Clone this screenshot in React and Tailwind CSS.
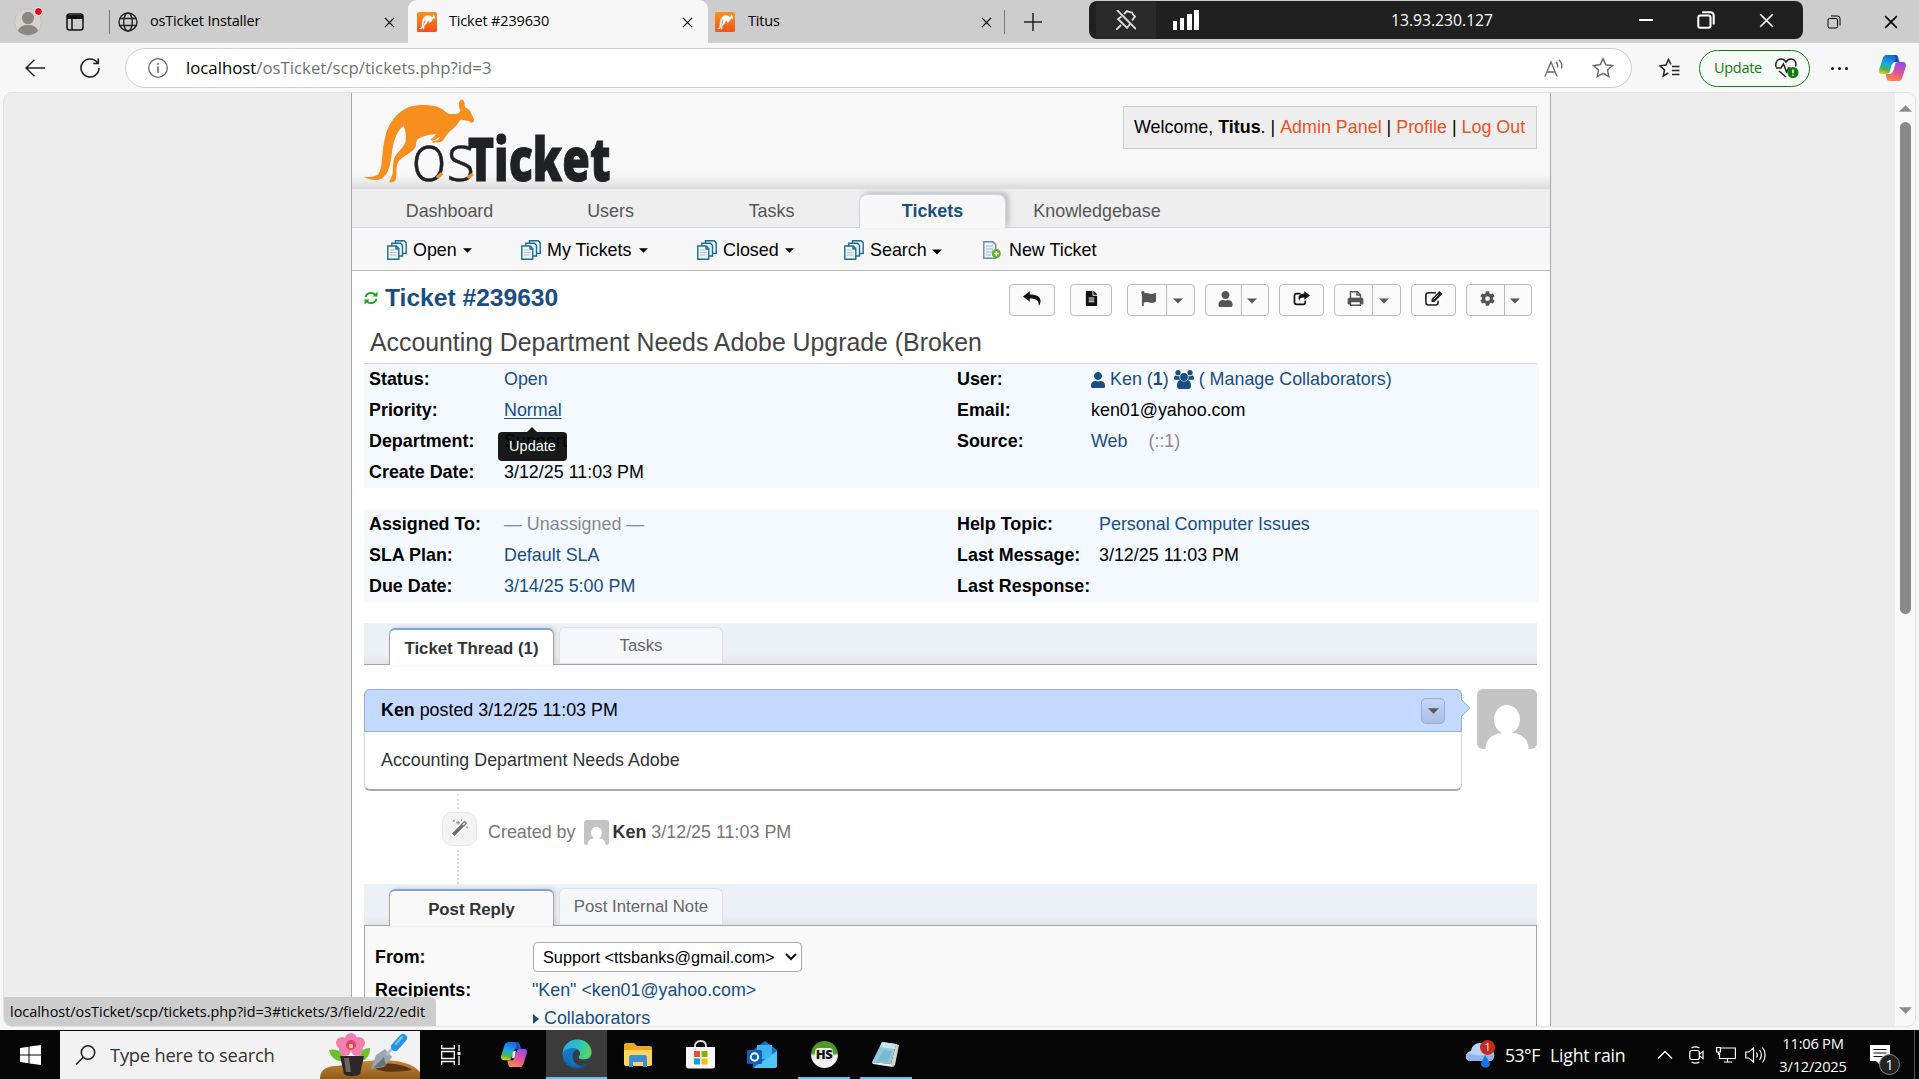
import React from "react";
import { FaFileAlt, FaFlag, FaUser, FaCog } from "react-icons/fa";

const Caret = ({ className = "" }) => (
  <svg viewBox="0 0 10 5" className={className} fill="currentColor"><path d="M0 0h10L5 5z" /></svg>
);

const CloseX = ({ className = "" }) => (
  <svg viewBox="0 0 12 12" className={className} fill="none" stroke="currentColor" strokeWidth="1.4"><path d="M1 1l10 10M11 1L1 11" /></svg>
);

const Restore = ({ className = "", w = 1.3 }) => (
  <svg viewBox="0 0 14 14" className={className} fill="none" stroke="currentColor" strokeWidth={w}>
    <rect x="1" y="3.5" width="9.5" height="9.5" rx="1.5" />
    <path d="M4 1h6.5a2.5 2.5 0 0 1 2.5 2.500V10.500" />
  </svg>
);

const KANGA =
  "M272 28C279 26 282 36 282 50C290 56 296 60 298 70L305 88C305 94 302 97 297 97C289 88 280 90 272 88C266 96 262 108 247 121C238 130 235 140 228 150C222 158 212 155 202 157C200 152 206 152 216 149L222 138L206 150C196 150 196 146 203 143L212 130C200 134 185 133 168 145C160 153 165 165 160 172C150 190 125 200 118 216C113 232 116 250 113 266C110 274 104 276 98 275C96 268 102 264 104 254C108 235 104 215 110 200C118 182 135 170 137 150C139 132 136 118 132 106C112 125 106 160 103 190C99 225 94 262 68 268C52 269 42 264 34 259C50 260 62 258 70 250C82 232 78 180 86 145C92 100 115 65 145 50C170 41 205 43 220 52C235 60 238 72 248 71C262 72 270 68 271 60C266 48 266 34 272 28Z";

const Logo = () => (
  <svg viewBox="30 20 620 260" preserveAspectRatio="none" className="ml-[10px] mt-[4px] block h-[87px] w-[253px] overflow-visible">
    <path d={KANGA} fill="#f78e1e" />
    <text x="151" y="271" textLength="156" lengthAdjust="spacingAndGlyphs" fontSize="198" fontWeight="300" fontFamily="'Open Sans'" fill="#202124" stroke="#202124" strokeWidth="1.500">os</text>
    <text x="289" y="271" textLength="350" lengthAdjust="spacingAndGlyphs" fontSize="182" fontWeight="800" fontFamily="'Open Sans'" fill="#202124" stroke="#202124" strokeWidth="3">Ticket</text>
    <path d="M214 262l12-14M289 262l12-12" stroke="#f78e1e" strokeWidth="9" />
  </svg>
);

const Favicon = () => (
  <svg viewBox="0 0 20 20" className="h-5 w-5 shrink-0">
    <defs><linearGradient id="fav" x1="0" y1="0" x2="0" y2="1"><stop stopColor="#f7931e" /><stop offset="1" stopColor="#f1511f" /></linearGradient></defs>
    <rect width="20" height="20" rx="1.500" fill="url(#fav)" />
    <svg x="2" y="2.500" width="16.500" height="15" viewBox="30 25 278 252" preserveAspectRatio="none"><path d={KANGA} fill="#fff" stroke="#fff" strokeWidth="8" /></svg>
  </svg>
);

const Copilot = ({ className = "" }) => (
  <svg viewBox="0 0 28 28" className={className}>
    <defs>
      <linearGradient id="cpA" x1="0.500" y1="0" x2="0.200" y2="1"><stop stopColor="#1566d6" /><stop offset="0.450" stopColor="#1ba6e8" /><stop offset="0.750" stopColor="#45b84e" /><stop offset="1" stopColor="#f6c90e" /></linearGradient>
      <linearGradient id="cpB" x1="0.700" y1="0" x2="0.300" y2="1"><stop stopColor="#8f4df0" /><stop offset="0.500" stopColor="#e0529c" /><stop offset="1" stopColor="#ff8a3c" /></linearGradient>
    </defs>
    <path d="M8 1h9c2 0 2.500 1 3 3l1 4h-4c-2 0-3 1-3.500 3l-2 6c-.6 2-1.500 3-3.500 3H4c-3 0-4-2-3.200-5L4 5C5 2 6 1 8 1z" fill="url(#cpA)" />
    <path d="M20 27h-9c-2 0-2.500-1-3-3l-1-4h4c2 0 3-1 3.500-3l2-6c.6-2 1.500-3 3.500-3h4c3 0 4 2 3.200 5L24 23c-1 3-2 4-4 4z" fill="url(#cpB)" />
    <path d="M16 8h4l-1-4c-.5-2-1-3-3-3h-2c2 0 2.500 1 3 3z" fill="#1448b8" />
    <path d="M12.500 12.500C13 10.500 14 10 16 10l-1 5.500c-.5 2-1 2.500-3 2.500z" fill="#fff" opacity=".9" />
  </svg>
);

const Docs = () => (
  <svg viewBox="0 0 20 20" className="mr-[6px] h-5 w-5 shrink-0" stroke="#1b6c94" strokeWidth="1.400" fill="#eef5f8">
    <path d="M8.500 .8h8.700l2 2.200v10.500H8.500z" />
    <path d="M4.800 3.300h8.700l2 2.200V16H4.800z" />
    <path d="M.8 6h8.500l2.500 2.500v10.700H.8z" />
    <path d="M9 6v3h3" fill="none" />
    <path d="M3 10h4M3 12.500h6.500M3 15h6.500" stroke="#b9c4c8" strokeWidth="1.100" />
  </svg>
);

const Avatar = ({ className = "" }) => (
  <svg viewBox="0 0 60 60" className={className}>
    <rect width="60" height="60" rx="6" fill="#c4c4c4" />
    <ellipse cx="30" cy="30.500" rx="13" ry="14.500" fill="#fff" />
    <path d="M8.500 60c0-9 6-15 16-16h11c10 1 16 7 16 16z" fill="#fff" />
    <rect x="25" y="40" width="10" height="8" fill="#fff" />
  </svg>
);

const Reply = () => <svg viewBox="0 0 20 16" className="h-[15px] w-[18px]"><path d="M7.500 0v3.600c7.500 0 12 2.400 12 7.200 0 1.700-.6 3.300-1.300 4.700-.4.400-.8.200-.7-.3C17.700 10.400 15 8 7.500 8v3.700L0 5.900z" fill="#111" /></svg>;
const Share = () => (
  <svg viewBox="0 0 18 16" className="h-[15px] w-[17px]" fill="none"><path d="M8 2.800H3.800C2.200 2.800 1.500 3.600 1.500 5v7c0 1.500.8 2.300 2.300 2.300h7c1.400 0 2.200-.8 2.200-2.300v-1.500" stroke="#111" strokeWidth="1.800" /><path d="M12 0l6 4.700-6 4.700V6.800c-3.500 0-5.500 1-5 4.200C4 6 7 2.800 12 2.700z" fill="#111" /></svg>
);
const Printer = () => (
  <svg viewBox="0 0 17 15" className="h-[15px] w-[17px]" fill="none" stroke="#555" strokeWidth="1.400"><path d="M3.500 8V.8h7l3 3V8M10 1v3h3" fill="#fff" /><path d="M1 13V8.500Q1 7 2.500 7h12Q16 7 16 8.500V13h-2.500v-2.500h-10V13z" fill="#555" strokeWidth=".8" /><path d="M3.500 10.500h10v3.700h-10z" fill="#fff" /></svg>
);
const Edit = () => (
  <svg viewBox="0 0 18 15" className="h-[15px] w-[18px]" fill="none"><path d="M11 1.800H3.500C2 1.800.9 2.800.9 4.200v7.300c0 1.400 1.100 2.500 2.600 2.500h7c1.500 0 2.600-1 2.600-2.500V9.800" stroke="#222" strokeWidth="1.600" /><path d="M14.500 0L17.500 2.800 9.500 11H6.500V8z" fill="#222" /><path d="M8.500 8.500l5-5" stroke="#ddd" strokeWidth=".8" /></svg>
);
const Refresh = () => (
  <svg viewBox="0 0 14 14" className="h-[14px] w-[14px] shrink-0" fill="none" stroke="#1ca81c" strokeWidth="2"><path d="M1.500 6C2.200 3.500 4.300 1.900 7 1.900c1.800 0 3.400.8 4.500 2M12.500 8c-.7 2.500-2.800 4.100-5.500 4.100-1.800 0-3.400-.8-4.500-2" /><path d="M13.500 .5v5h-5zM.5 13.500v-5h5z" fill="#1ca81c" stroke="none" /></svg>
);
const People = () => (
  <svg viewBox="0 0 20 19" className="ml-[5px] mr-[5px] h-[19px] w-5 shrink-0" fill="currentColor">
    <circle cx="4" cy="2.700" r="2.600" /><circle cx="16" cy="2.700" r="2.600" />
    <path d="M0 8.500C0 6.500.7 5.400 1.800 5.400c1 .8 2.500 1 3.800.5-.3 1.500 0 2.600.8 3.800H2C.7 9.700 0 9.500 0 8.500zM20 8.500c0-2-.7-3.100-1.800-3.100-1 .8-2.500 1-3.800.5.3 1.500 0 2.600-.8 3.800H18c1.300 0 2-.2 2-1.200z" />
    <circle cx="10" cy="7" r="3.900" />
    <path d="M3 16c0-3.500 1-5.800 3.500-5.900 2 2 5 2 7 0C16 10.200 17 12.500 17 16c0 2-1 3-2.700 3H5.700C4 19 3 18 3 16z" />
  </svg>
);
const Wand = () => (
  <svg viewBox="0 0 18 18" className="h-[17px] w-[18px]"><path d="M1 15.500L13.800 2.200l2.200 2.200L3.200 17.500z" fill="#6f6f6f" stroke="#6f6f6f" strokeLinejoin="round" /><path d="M11.300 6l2.600-2.600 1 1L12.300 7z" fill="#eee" /><path d="M7 2v4M5 4h4M2.500 1v2M1.500 2h2M10.500 0v2M16.500 8v2" stroke="#777" strokeWidth="1" /></svg>
);

const Btn = ({ w, children }) => (
  <div className={`${w} flex h-8 shrink-0 items-center justify-center rounded-[4px] border border-[#bbb] bg-[#fafafa] pb-[3px]`}>{children}</div>
);
const Split = ({ w, l, children }) => (
  <div className={`${w} flex h-8 shrink-0 rounded-[4px] border border-[#bbb] bg-[#fafafa] text-[#555]`}>
    <div className={`${l} flex items-center justify-center border-r border-[#bbb] pb-[3px]`}>{children}</div>
    <div className="flex flex-1 items-center justify-center pr-[6px] pt-[2px]"><Caret className="h-[6px] w-[10px]" /></div>
  </div>
);

const Row = ({ a, b, c, d, wide }) => (
  <div className="flex h-[31px] items-center whitespace-nowrap text-[17.900px] leading-none">
    <div className="w-[136px] pl-[1px] font-bold">{a}</div>
    <div className="w-[453px]">{b}</div>
    <div className={`${wide ? "w-[142px]" : "w-[134px]"} font-bold`}>{c}</div>
    <div>{d}</div>
  </div>
);

const Strip = ({ active, other, bg }) => (
  <div className="flex h-[42px] w-[1173px] border-b border-[#a5a5a5] bg-[#ecf1f5] bg-gradient-to-b from-[#ecf1f5] from-75% to-[#e2e6ea] pl-[25px] text-[16.800px] leading-none">
    <div className={`${bg} mt-[5px] flex h-[37px] w-[165px] items-center justify-center rounded-t-[6px] border border-b-0 border-t-2 border-[#a5a5a5] border-t-[#7fa5db] pt-[3px] font-bold text-[#333] shadow-[2px_-1px_4px_rgba(0,0,0,0.12)]`}>{active}</div>
    <div className="ml-[5px] mt-[4px] flex h-[36px] w-[164px] items-center justify-center rounded-t-[6px] border border-b-0 border-[#dcdfe4] bg-[#f5f7fb] pt-[2px] text-[#666]">{other}</div>
  </div>
);

const link = "text-[#184e81]";
const ui = "font-['Open_Sans',sans-serif]";

function TabBar() {
  return (
    <div className={`flex h-[43px] items-center bg-[#cdcdcd] text-[14.500px] text-black ${ui}`}>
      <div className="relative ml-[14px] h-7 w-7">
        <svg viewBox="0 0 28 28" className="h-7 w-7"><circle cx="14" cy="14" r="13.500" fill="#d6d3cf" stroke="#c2c2c2" /><ellipse cx="14" cy="10" rx="6" ry="6.200" fill="#8b8784" /><path d="M4 23c1-5 6-6 10-6s9 1 10 6c-5 5.500-15 5.500-20 0z" fill="#8b8784" /></svg>
        <div className="absolute -top-[1px] left-[20px] h-[9px] w-[9px] rounded-full border border-white bg-[#e3000b]" />
      </div>
      <svg viewBox="0 0 18 18" className="ml-6 h-[18px] w-[18px]"><rect x="1" y="1" width="16" height="16" rx="2.500" fill="none" stroke="#111" strokeWidth="1.500" /><path d="M1 2h16v4H1z" fill="#111" /><path d="M6 6v11" stroke="#111" strokeWidth="1.500" /></svg>
      <div className="ml-[25px] h-6 w-px bg-[#777]" />
      <svg viewBox="0 0 20 20" className="ml-[8px] h-5 w-5" fill="none" stroke="#222" strokeWidth="1.400"><circle cx="10" cy="10" r="9" /><ellipse cx="10" cy="10" rx="4.300" ry="9" /><path d="M2 6.500h16M2 13.500h16" /></svg>
      <div className="ml-[12px] w-[234px] whitespace-nowrap pb-[2px] tracking-[-0.170px]">osTicket Installer</div>
      <CloseX className="mt-[2px] h-[11px] w-[11px]" />
      <div className="relative ml-[13px] flex h-full w-[300px] items-center rounded-t-[9px] bg-[#f7f7f7] pl-[9px]">
        <Favicon />
        <div className="ml-[12px] w-[233px] whitespace-nowrap pb-[2px] tracking-[-0.170px]">Ticket #239630</div>
        <CloseX className="mt-[2px] h-[11px] w-[11px]" />
      </div>
      <div className="ml-[7px]"><Favicon /></div>
      <div className="ml-[13px] w-[233px] whitespace-nowrap pb-[2px] tracking-[-0.170px]">Titus</div>
      <CloseX className="mt-[2px] h-[11px] w-[11px]" />
      <div className="ml-[12px] h-6 w-px bg-[#777]" />
      <svg viewBox="0 0 18 18" className="ml-[19px] h-[18px] w-[18px]" stroke="#222" strokeWidth="1.500"><path d="M9 0v18M0 9h18" /></svg>
      <div className="mb-[3px] ml-[47px] flex h-[38px] w-[714px] items-center rounded-[8px] bg-[#202020] pl-[7px] text-white">
        <div className="flex h-full w-[60px] items-center justify-center bg-[#2a2a2a]">
          <svg viewBox="0 0 20 20" className="h-5 w-5" fill="none" stroke="#ddd" strokeWidth="1.800"><path d="M1 0l19 19M0 20l5-5M8 4l3-3c2 1 3.500 1 5 1.500 1 1.500 1 3 3 4l-3 4M5.500 6.500L2 9l9 9 3-4" /></svg>
        </div>
        <svg viewBox="0 0 26 20" className="ml-[17px] h-5 w-[26px]" fill="#fff"><path d="M0 11h4v9H0zM7 8h4v12H7zM14 4h5v16h-5zM21 0h5v20h-5z" /></svg>
        <div className="ml-[192px] w-[110px] whitespace-nowrap pt-px text-[15.700px]">13.93.230.127</div>
        <div className="ml-[138px] h-[2px] w-[14px] bg-white" />
        <Restore className="ml-[44px] h-[18px] w-[18px]" w={1.6} />
        <CloseX className="ml-[44px] h-[15px] w-[15px]" />
      </div>
      <Restore className="ml-[24px] h-[14px] w-[14px]" w={1} />
      <CloseX className="ml-[43px] h-[14px] w-[14px]" />
    </div>
  );
}

const STAR = "M10 1.500l2.600 5.600 6 .7-4.500 4.100 1.200 6-5.300-3-5.300 3 1.200-6L1.400 7.800l6-.7z";

function Toolbar() {
  return (
    <div className={`flex h-[49px] items-center bg-[#f7f7f7] pt-px ${ui}`}>
      <svg viewBox="0 0 20 18" className="ml-[25px] h-[18px] w-5" fill="none" stroke="#222" strokeWidth="1.500"><path d="M20 9H1M9.500 .8L1 9l8.500 8.200" /></svg>
      <svg viewBox="0 0 20 20" className="ml-[35px] h-5 w-5" fill="none" stroke="#222" strokeWidth="1.600"><path d="M17.500 5A9 9 0 1 0 19 10M18.300 .5v5h-5" /></svg>
      <div className="ml-[25px] flex h-[40px] w-[1507px] items-center rounded-full border border-[#cfcfcf] bg-white pl-[22px] text-[16.800px]">
        <svg viewBox="0 0 20 20" className="h-5 w-5" fill="none" stroke="#666" strokeWidth="1.300"><circle cx="10" cy="10" r="9.300" /><path d="M10 8.500V15M10 5v1.800" strokeWidth="1.600" /></svg>
        <div className="ml-[18px] whitespace-nowrap pb-px text-[#717171]"><span className="text-black">localhost</span>/osTicket/scp/tickets.php?id=3</div>
        <svg viewBox="0 0 20 18" className="ml-auto h-[18px] w-5" fill="none" stroke="#666" strokeWidth="1.300"><path d="M1 17.500L7 3l6 14.500M3 13h8M12 3c1.500 1.500 2 3 1.500 5.500M15 .8c2.500 2.500 3.500 5 2.500 8.700" /></svg>
        <svg viewBox="0 0 20 20" className="ml-[28px] mr-[17px] h-[22px] w-[22px]" fill="none" stroke="#666" strokeWidth="1.300"><path d={STAR} /></svg>
      </div>
      <svg viewBox="0 0 21 20" className="ml-[27px] h-5 w-[21px]" fill="none" stroke="#222" strokeWidth="1.500"><path d="M12 6.500L9.500 1.500 7 7l-6 .8 4.500 4.100-1.200 6 5-2.900M13 8.500h7.500M13 12.500h7.500M13 16.500h7.500" /></svg>
      <div className="ml-[19px] flex h-[37px] w-[111px] items-center rounded-full border-[1.500px] border-[#107c10] bg-[#f7fbf7] pl-[14px] text-[14.500px] tracking-[-0.300px] text-[#107c10]">
        <span className="w-[61px] pb-px">Update</span>
        <svg viewBox="0 0 24 20" className="h-[20px] w-[24px]" fill="none" stroke="#222" strokeWidth="1.500"><path d="M1 9C0 4 2.500 1 6 1c2 0 3.800 1 5 3 1.200-2 3-3 5-3 3.500 0 6 3 4.500 7.500M1 10h5l2.500-4 3 8 2-4h2M4 13l7 6" /><circle cx="18" cy="14.500" r="5.500" fill="#107c10" stroke="none" /><path d="M18 11.500v3.800M18 16.500v1.300" stroke="#fff" /></svg>
      </div>
      <div className="ml-[21px] flex w-[17px] justify-between"><i className="h-[3px] w-[3px] rounded-full bg-[#111]" /><i className="h-[3px] w-[3px] rounded-full bg-[#111]" /><i className="h-[3px] w-[3px] rounded-full bg-[#111]" /></div>
      <Copilot className="ml-[30px] h-[28px] w-[29px]" />
    </div>
  );
}

function Header() {
  return (
    <>
      <div className="flex h-[96px] justify-between bg-[#f8f8f8] bg-gradient-to-b from-[#f8f8f8] from-85% to-[#dcdcdc]">
        <Logo />
        <div className="mr-[13px] mt-[13px] flex h-[43px] w-[414px] whitespace-pre border border-[#ccc] bg-[#eee] pl-[10px] pt-[10px] text-[17.900px] leading-[20px]">
          Welcome, <b>Titus</b>. | <span className="text-[#e8531f]">Admin Panel</span> | <span className="text-[#e8531f]">Profile</span> | <span className="text-[#e8531f]">Log Out</span>
        </div>
      </div>
      <div className="flex h-[39px] border-b border-[#c5d9e8] bg-[#eee] text-[17.900px] text-[#555]">
        <div className="ml-[17px] flex w-[161px] items-center justify-center pt-[6px]">Dashboard</div>
        <div className="flex w-[161px] items-center justify-center pt-[6px]">Users</div>
        <div className="flex w-[161px] items-center justify-center pt-[6px]">Tasks</div>
        <div className="ml-[7px] mt-[5px] flex h-[34px] w-[147px] items-center justify-center rounded-t-[8px] border border-b-0 border-[#c5d9e8] bg-[#f7f7f7] font-bold text-[#184e81] shadow-[3px_-2px_5px_rgba(0,0,0,0.2)]">Tickets</div>
        <div className="flex w-[182px] items-center justify-center pt-[6px]">Knowledgebase</div>
      </div>
      <div className="flex h-[43px] items-center whitespace-nowrap border-b border-[#b8b8b8] bg-[#f7f7f7] pl-[35px] pt-[2px] text-[17.900px]">
        <div className="flex w-[134px] items-center"><Docs />Open<Caret className="ml-[6px] mt-px h-[5px] w-[9px]" /></div>
        <div className="flex w-[176px] items-center"><Docs />My Tickets<Caret className="ml-[7px] mt-px h-[5px] w-[9px]" /></div>
        <div className="flex w-[147px] items-center"><Docs />Closed<Caret className="ml-[6px] mt-px h-[5px] w-[9px]" /></div>
        <div className="flex w-[139px] items-center"><Docs />Search<Caret className="ml-[5px] mt-[5px] h-[6px] w-[10px]" /></div>
        <div className="flex items-center">
          <svg viewBox="0 0 18 18" className="mr-[8px] h-[18px] w-[18px]"><path d="M.8.8h9l3 3v13.400H.8z" fill="#edf5fb" stroke="#6d86a5" strokeWidth="1.400" /><path d="M3 5h7M3 8h7M3 11h7M3 14h5" stroke="#8dbbe0" /><circle cx="13.300" cy="12.500" r="4.500" fill="#5db51a" /><path d="M13.300 10v5M10.800 12.500h5" stroke="#fff" strokeWidth="1.500" /></svg>
          New Ticket
        </div>
      </div>
    </>
  );
}

function Ticket() {
  return (
    <div className="pl-[12px]">
      <div className="flex h-[45px] pt-[13px]">
        <div className="flex h-[28px] w-[645px] items-center text-[24.600px] font-bold text-[#184e81]"><Refresh /><span className="ml-[7px]">Ticket #239630</span></div>
        <Btn w="w-[46px]"><Reply /></Btn><div className="w-[15px]" />
        <Btn w="w-[42px]"><FaFileAlt className="h-[15px] w-[13px] text-[#111]" /></Btn><div className="w-[15px]" />
        <Split w="w-[68px]" l="w-[39px]"><FaFlag className="ml-[2px] h-[15px] w-[17px]" /></Split><div className="w-[10px]" />
        <Split w="w-[64px]" l="w-[36px]"><FaUser className="ml-[3px] h-[16px] w-[15px]" /></Split><div className="w-[10px]" />
        <Btn w="w-[45px]"><Share /></Btn><div className="w-[10px]" />
        <Split w="w-[67px]" l="w-[38px]"><span className="ml-[4px]"><Printer /></span></Split><div className="w-[10px]" />
        <Btn w="w-[45px]"><Edit /></Btn><div className="w-[10px]" />
        <Split w="w-[66px]" l="w-[38px]"><FaCog className="ml-[4px] h-[15px] w-[15px]" /></Split>
      </div>
      <div className="flex h-[48px] w-[1173px] items-end whitespace-nowrap border-b border-[#d6d9dd] pb-[6px] pl-[6px] text-[24.850px] leading-[28px] text-[#444]">Accounting Department Needs Adobe Upgrade (Broken</div>

      <div className="h-[124px] w-[1175px] bg-[#f4f9ff] pl-[4px]">
        <Row a="Status:" b={<span className={link}>Open</span>} c="User:" d={<span className={`${link} flex items-center`}><FaUser className="mr-[5px] h-[16px] w-[14px]" />Ken (<b>1</b>)<People />( Manage Collaborators)</span>} />
        <Row
          a="Priority:"
          b={
            <span className="relative inline-block text-[#184e81] underline underline-offset-2">
              Normal
              <span className="absolute left-[-6px] top-[30px] z-10 flex h-[29px] w-[69px] items-center justify-center rounded-[4px] bg-[rgba(0,0,0,0.9)] text-[14.500px] text-white">
                <Caret className="absolute -top-[5px] left-[29px] h-[5px] w-[10px] rotate-180 text-[#181818]" />Update
              </span>
            </span>
          }
          c="Email:" d="ken01@yahoo.com"
        />
        <Row a="Department:" b={<span className={link}>Support</span>} c="Source:" d={<span className={link}>Web<span className="ml-[21px] text-[#888]">(::1)</span></span>} />
        <Row a="Create Date:" b="3/12/25 11:03 PM" />
      </div>
      <div className="mt-[21px] h-[93px] w-[1175px] bg-[#f4f9ff] pl-[4px]">
        <Row wide a="Assigned To:" b={<span className="text-[#888]">— Unassigned —</span>} c="Help Topic:" d={<span className={link}>Personal Computer Issues</span>} />
        <Row wide a="SLA Plan:" b={<span className={link}>Default SLA</span>} c="Last Message:" d="3/12/25 11:03 PM" />
        <Row wide a="Due Date:" b={<span className={link}>3/14/25 5:00 PM</span>} c="Last Response:" />
      </div>

      <div className="mt-[21px]"><Strip active="Ticket Thread (1)" other="Tasks" bg="bg-white" /></div>

      <div className="mt-[24px] flex">
        <div className="h-[102px] w-[1098px] rounded-[6px] border border-b-2 border-[#d5d5d5] border-b-[#a8a8a8] text-[17.850px]">
          <div className="relative -mx-px -mt-px flex h-[43px] items-center whitespace-pre rounded-t-[6px] border border-[#97acd2] bg-[#c3d9ff] pl-[16px]">
            <b>Ken</b> posted 3/12/25 11:03 PM
            <div className="ml-auto mr-[16px] flex h-[26px] w-6 items-center justify-center rounded-[5px] border border-[#9cadcc] bg-gradient-to-b from-[#c3d5f7] to-[#acbfe3] text-[#555b6b]"><Caret className="h-[6px] w-[11px]" /></div>
            <svg viewBox="0 0 10 18" className="absolute left-[1096px] top-[9px] h-[18px] w-[10px]"><path d="M0 0l9 9-9 9" fill="#c3d9ff" stroke="#97acd2" /></svg>
          </div>
          <div className="flex h-[55px] items-center pl-[16px] pt-[2px] text-[#333]">Accounting Department Needs Adobe</div>
        </div>
        <Avatar className="ml-[15px] h-[60px] w-[60px]" />
      </div>

      <div className="mt-[3px] flex h-[90px] text-[17.900px] text-[#777]">
        <div className="ml-[78px] flex w-[35px] flex-col items-center">
          <div className="ml-[15px] h-[15px] w-0 self-start border-l-2 border-dotted border-[#ddd]" />
          <div className="mt-[3px] flex h-[34px] w-[35px] shrink-0 items-center justify-center rounded-[10px] border border-[#e8e8e8] bg-[#f3f3f3] pb-[3px]"><Wand /></div>
          <div className="ml-[15px] mt-[4px] h-[34px] w-0 self-start border-l-2 border-dotted border-[#ddd]" />
        </div>
        <div className="flex h-[76px] items-center pl-[11px]">Created by<Avatar className="ml-[8px] mr-[4px] h-[25px] w-[25px]" /><b className="mr-[5px] text-[#333]">Ken</b>3/12/25 11:03 PM</div>
      </div>

      <Strip active="Post Reply" other="Post Internal Note" bg="bg-[#f9f9f9]" />
      <div className="h-[110px] w-[1173px] border-x border-[#a5a5a5] bg-[#f9f9f9] pl-[10px] pt-[16px] text-[17.850px] leading-none">
        <div className="flex h-[30px] items-center">
          <b className="w-[158px] pt-px">From:</b>
          <div className="flex h-[30px] w-[269px] items-center justify-between whitespace-nowrap rounded-[4px] border border-[#aaa] bg-white pl-[9px] pr-[4px] text-[16.250px]">
            {"Support <ttsbanks@gmail.com>"}
            <svg viewBox="0 0 12 8" className="h-[8px] w-[12px]" fill="none" stroke="#111" strokeWidth="2"><path d="M1 1l5 5 5-5" /></svg>
          </div>
        </div>
        <div className="mt-[4px] flex h-[30px] items-center"><b className="w-[157px]">Recipients:</b><span className={link}>{'"Ken" <ken01@yahoo.com>'}</span></div>
        <div className={`ml-[158px] flex h-[26px] items-center ${link}`}><svg viewBox="0 0 6 10" className="mr-[5px] h-[10px] w-[6px]" fill="currentColor"><path d="M0 0l6 5-6 5z" /></svg>Collaborators</div>
      </div>
    </div>
  );
}

const Cell = ({ w = "w-[62px]", on, children }) => (
  <div className={`${w} relative flex h-full shrink-0 items-center justify-center`}>
    {children}
    {on && <div className="absolute bottom-0 left-[5px] right-[5px] h-[2px] bg-[#76b9ed]" />}
  </div>
);

function Taskbar() {
  return (
    <div className={`flex h-[49px] items-center bg-[#060606] text-white ${ui}`}>
      <Cell w="w-[60px]"><svg viewBox="0 0 21 20" className="h-5 w-[21px]" fill="#fff"><path d="M0 3l8.500-1.200v7.700H0zM9.500 1.600L21 0v9.500H9.500zM0 10.500h8.500v7.700L0 17zM9.500 10.500H21V20L9.500 18.400z" /></svg></Cell>
      <div className="mt-px flex h-[48px] w-[360px] items-center bg-[#f2f2f2] text-[#333]">
        <svg viewBox="0 0 21 20" className="ml-[15px] h-5 w-[21px]" fill="none" stroke="#222" strokeWidth="1.600"><circle cx="13" cy="7.500" r="6.700" /><path d="M8.300 12.300L1 19.500" /></svg>
        <div className="ml-[14px] w-[210px] whitespace-nowrap text-[18.400px] tracking-[-0.250px]">Type here to search</div>
        <svg viewBox="0 0 100 48" className="h-[48px] w-[100px]">
          <defs><linearGradient id="soil" x1="0" y1="0" x2="0" y2="1"><stop stopColor="#c48a3a" /><stop offset="1" stopColor="#8f5a1d" /></linearGradient></defs>
          <path d="M0 48c0-8 5-13 16-13 12-1 20-5 34-5 16-3 42 0 50 11v7z" fill="url(#soil)" />
          <path d="M52 34c15-3 32-1 40 5-14 2-35 4-40-5z" fill="#5e3511" />
          <path d="M9 19c8-2 14 2 16 10-8 3-14-2-16-10zM50 17c-8 0-12 5-11 13 8 0 11-6 11-13z" fill="#6cc22c" />
          <path d="M20 25h24l-4 18c-3 3-13 3-16 0z" fill="#2c2626" /><path d="M24 27h5l2 14h-5z" fill="#6b6261" />
          <g fill="#f080ad"><circle cx="31" cy="8" r="6" /><circle cx="39" cy="12" r="6" /><circle cx="37" cy="19" r="6" /><circle cx="25" cy="19" r="6" /><circle cx="22" cy="12" r="6" /></g>
          <circle cx="31" cy="14" r="5" fill="#dd3f7f" /><circle cx="31" cy="15" r="2.200" fill="#f6cf4a" />
          <path d="M56 24l9-6 7 8-8 10-13 2z" fill="#9ba6af" /><path d="M64 26l-11 11 13-2z" fill="#68737d" />
          <path d="M66 24l11-11" stroke="#b6bfc7" strokeWidth="2.500" /><path d="M75 16l8-9" stroke="#2394e6" strokeWidth="8" strokeLinecap="round" /><path d="M76 13l6-7" stroke="#73c7ff" strokeWidth="2" strokeLinecap="round" />
        </svg>
      </div>
      <Cell w="w-[61px]"><svg viewBox="0 0 20 20" className="h-5 w-5" fill="none" stroke="#fff" strokeWidth="1.300"><path d="M.7 0v3.500h12.600V0M.7 20v-3.500h12.600V20M.7 6.500h12.600v7H.7zM18 0v6M18 11v9" /><path d="M16.500 7h3v3h-3z" fill="#fff" stroke="none" /></svg></Cell>
      <Cell w="w-[65px]"><Copilot className="h-[27px] w-[28px]" /></Cell>
      <div className="flex h-full w-[61px] items-center justify-center border-b-2 border-[#76b9ed] bg-[#3b3b3b]">
        <svg viewBox="0 0 30 30" className="h-[30px] w-[30px]">
          <defs><linearGradient id="edA" x1="0" y1="0.300" x2="1" y2="0.500"><stop stopColor="#2aa6e0" /><stop offset="0.600" stopColor="#2fc6b8" /><stop offset="1" stopColor="#5fd852" /></linearGradient><linearGradient id="edB" x1="0" y1="0" x2="0.500" y2="1"><stop stopColor="#1a8fdd" /><stop offset="1" stopColor="#0c59a4" /></linearGradient></defs>
          <circle cx="15" cy="15" r="14.500" fill="url(#edB)" />
          <path d="M29.500 14.500l1 10-5 1-3.500-2c2.500-.3 5.500-1 6.500-4z" fill="#3b3b3b" />
          <path d="M.6 14C2 5 8 .5 15.500.5 24 .5 29.500 7 29.500 13c0 5-4 7.500-8 7.500-3 0-5-1-5-2.300 0-1 1.500-1.600 1.500-4 0-3-3-5.200-7-5.200C6 9 2 11 .6 14z" fill="url(#edA)" />
          <path d="M10.500 17c0-4 2.500-6 5-6 1.800 1 2.500 2 2.500 3.400 0 2-1.500 2.600-1.500 3.800 0 1.500 2.500 2.500 6 2.300 2 0 4-.8 5.300-1.500C26 25 21 27.500 17 26.500c-4-1-6.500-5-6.500-9.500z" fill="#3b3b3b" />
          <path d="M10.500 17c0 5 3 9.500 9 10-3 1-6 .8-8 0C7 25 4.500 19 8 13c1-1.500 4-3 7-2.500-2.500.7-4.500 3-4.500 6.500z" fill="#1273c4" />
        </svg>
      </div>
      <Cell><svg viewBox="0 0 28 24" className="h-[24px] w-[28px]"><path d="M0 2Q0 0 2 0h8l3 3h13q2 0 2 2v17H0z" fill="#e9a820" /><path d="M0 7h28v14q0 2-2 2H2q-2 0-2-2z" fill="#fcd462" /><path d="M5 24V14q0-2 2-2h14q2 0 2 2v10h-4v-5H9v5z" fill="#3e8ed8" /></svg></Cell>
      <Cell><svg viewBox="0 0 29 29" className="h-[29px] w-[29px]"><path d="M9 9V6.500C9 3 11 1 14.500 1S20 3 20 6.500V9" fill="none" stroke="#ddd" strokeWidth="1.800" /><path d="M0 7h29v19q0 2.500-2.500 2.500h-24Q0 28.500 0 26z" fill="#f7f7f7" /><path d="M8 11h6v6H8z" fill="#f25022" /><path d="M15.500 11h6v6h-6z" fill="#7fba00" /><path d="M8 18.500h6v6H8z" fill="#00a4ef" /><path d="M15.500 18.500h6v6h-6z" fill="#ffb900" /></svg></Cell>
      <Cell><svg viewBox="0 0 30 27" className="h-[27px] w-[30px]"><path d="M6 9L18 0l12 9v16q0 2-2 2H8q-2 0-2-2z" fill="#1173c9" /><path d="M10 4h15v14H10z" fill="#3fb0f2" /><path d="M6 27l24-17v15q0 2-2 2z" fill="#52c5f7" /><rect y="9" width="15" height="14" rx="1.500" fill="#0f5fb8" /><circle cx="7.500" cy="16" r="3.700" fill="none" stroke="#fff" strokeWidth="2" /></svg></Cell>
      <Cell on><div className="flex h-[27px] w-[27px] items-center justify-center rounded-full bg-gradient-to-b from-[#4f9a22] from-45% to-[#f2f2f2] to-55% text-[13px] font-extrabold tracking-[-0.500px]"><span className="rounded-sm bg-[#eceeea] px-px leading-[13px] text-[#181818]">HS</span></div></Cell>
      <Cell on><svg viewBox="0 0 28 27" className="h-[27px] w-[28px]"><path d="M10 1l14 2-5 20L0 21z" fill="#8fc9dc" /><path d="M10 1l14 2-1.300 5L8 6z" fill="#c9e6ee" /><path d="M24 3l3 1-4 20-2 2-2-3z" fill="#d9d3c5" /><path d="M0 21l19 2 2 3-20-3z" fill="#f0f0ee" /><path d="M12 9l8 1-4 11-11-1z" fill="#62adc6" opacity=".5" /></svg></Cell>

      <div className="relative ml-auto h-[31px] w-[31px]">
        <svg viewBox="0 0 31 31" className="h-[31px] w-[31px]"><path d="M6 22C-1 22-1 13 6 12 7 3 19 1 21 9c8-1 11 8 5 13z" fill="#b9d4f8" /><path d="M6 22c-6 0-6-6-3-8 7 3 17 3 26 1 1 3-1 6-3 7z" fill="#8fb4ee" /><path d="M20 16c4 6 5 8 5 10a5 5 0 0 1-9 0c0-3 2-5 4-10z" fill="#1677e8" /></svg>
        <div className="absolute left-[15px] top-[1px] flex h-[15px] w-[15px] items-center justify-center rounded-full bg-[#c42b1c] text-[10px]">1</div>
      </div>
      <div className="ml-[9px] w-[45px] whitespace-nowrap pt-px text-[17.600px] tracking-[-0.500px]">53°F</div>
      <div className="w-[107px] whitespace-nowrap pt-px text-[17.700px] tracking-[-0.200px]">Light rain</div>
      <svg viewBox="0 0 16 9" className="h-[9px] w-4" fill="none" stroke="#fff" strokeWidth="1.400"><path d="M1 8.500l7-7 7 7" /></svg>
      <svg viewBox="0 0 15 18" className="ml-[16px] h-[18px] w-[15px]" fill="none" stroke="#fff" strokeWidth="1.200"><rect x=".8" y="4.500" width="9.500" height="9" rx="2" /><path d="M10.500 8l3.500-2.500v7L10.500 10M2.500 2C5 .5 8 .5 10.500 2M2.500 16c2.500 1.500 5.500 1.500 8 0" /></svg>
      <svg viewBox="0 0 20 17" className="ml-[12px] h-[17px] w-5" fill="none" stroke="#fff" strokeWidth="1.200"><path d="M5 2h14.400v10.500H3.500V7M8 16h8M11.500 13v3M.6 1.500h3.800V6H.6zM2.500 6v3" /></svg>
      <svg viewBox="0 0 22 18" className="ml-[9px] h-[18px] w-[22px]" fill="none" stroke="#fff" strokeWidth="1.200"><path d="M.8 6h3L8.500 2v14L3.800 12h-3zM11.500 6.500c1 1.500 1 3.500 0 5M14.500 4c2.300 3 2.300 7 0 10M17.500 1.500c3.500 4.500 3.500 10.500 0 15" /></svg>
      <div className="ml-[6px] flex w-[80px] flex-col items-center whitespace-nowrap pt-px text-[14.700px] leading-[23px] tracking-[-0.250px]"><span>11:06 PM</span><span>3/12/2025</span></div>
      <div className="relative ml-[17px] mr-[23px] h-[20px] w-[21px]">
        <svg viewBox="0 0 20 20" className="h-5 w-5"><path d="M0 0h20v16H10v4l-4-4H0z" fill="#fff" /><path d="M3.500 4.500h13M3.500 8h13M3.500 11.500h9" stroke="#111" /></svg>
        <div className="absolute left-[9px] top-[9px] flex h-[21px] w-[21px] items-center justify-center rounded-full border border-[#888] bg-[#222] text-[14px]">1</div>
      </div>
      <div className="mr-[4px] h-full w-px bg-[#555]" />
    </div>
  );
}

export default function App() {
  return (
    <div className="flex h-[1079px] w-[1919px] flex-col overflow-hidden bg-[#f7f7f7] font-['Liberation_Sans',Arial,sans-serif] text-black">
      <TabBar />
      <Toolbar />
      <div className="relative mb-[3px] ml-[3px] flex h-[935px] w-[1913px] overflow-hidden rounded-[9px] border border-[#e2e2e2] bg-[#ededed]">
        <div className="ml-[347px] h-[1000px] w-[1200px] shrink-0 border-x border-[#a8a8a8] bg-white">
          <Header />
          <Ticket />
        </div>
        <div className="ml-auto flex w-[20px] flex-col items-center bg-[#f9f9f9] text-[#8a8a8a]">
          <Caret className="mt-[12px] h-[7px] w-[13px] rotate-180" />
          <div className="mt-[10px] h-[492px] w-[11px] rounded-full bg-[#8a8a8a]" />
          <Caret className="mb-[12px] mt-auto h-[7px] w-[13px]" />
        </div>
        <div className={`absolute bottom-0 left-0 flex h-[29px] w-[432px] items-center whitespace-nowrap rounded-tr-[5px] bg-[#cdcdcd] pl-[6px] text-[14.400px] ${ui}`}>localhost/osTicket/scp/tickets.php?id=3#tickets/3/field/22/edit</div>
      </div>
      <Taskbar />
    </div>
  );
}
